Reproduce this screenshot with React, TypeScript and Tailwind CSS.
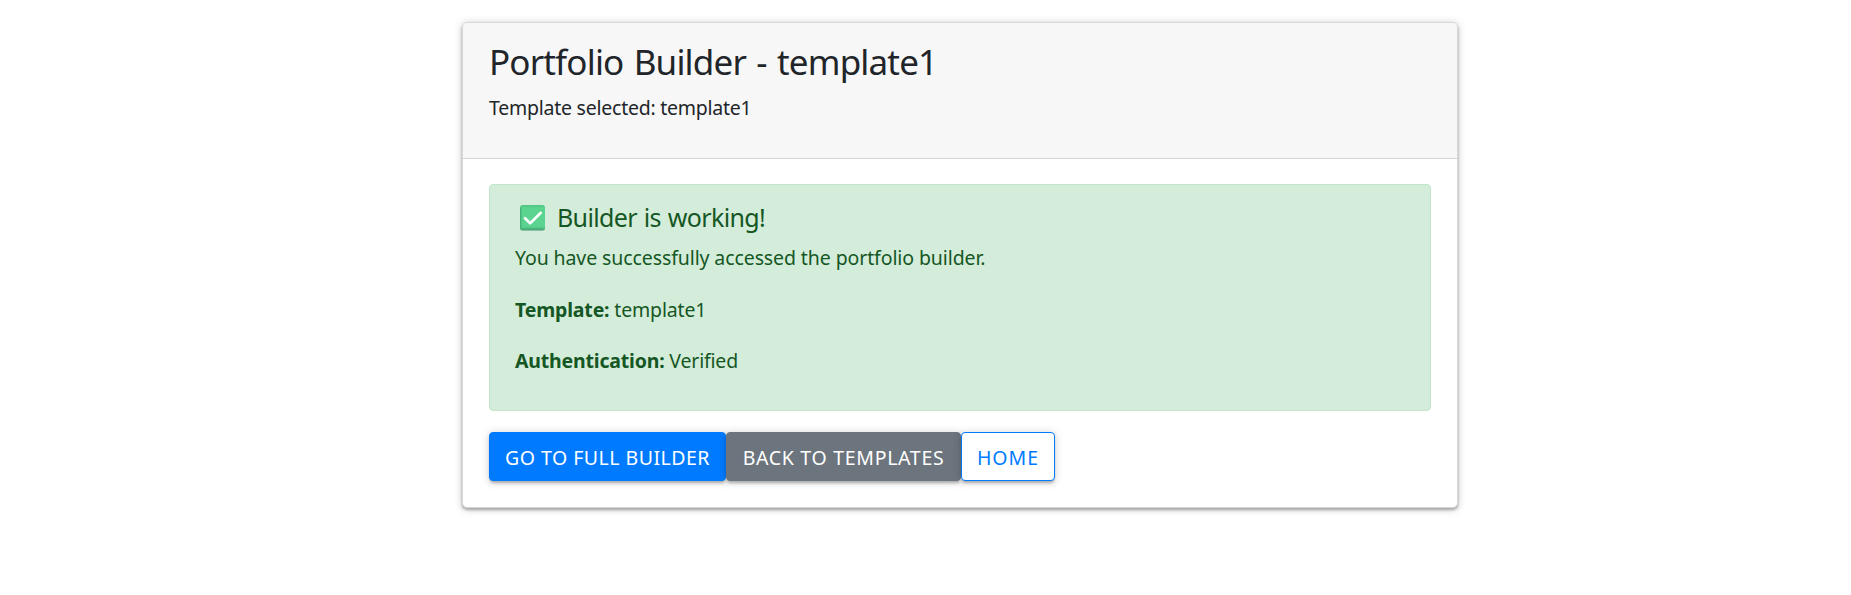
import React from "react";

function CheckMark() {
  return (
    <svg width="25" height="26" viewBox="0 0 25 26" className="block shrink-0" aria-hidden="true">
      <defs>
        <linearGradient id="edge" x1="0" y1="0" x2="0" y2="1">
          <stop offset="0" stopColor="#50c288" />
          <stop offset="0.12" stopColor="#5ad58f" />
          <stop offset="0.85" stopColor="#5ad390" />
          <stop offset="1" stopColor="#419a70" />
        </linearGradient>
      </defs>
      <rect x="0" y="0" width="25" height="25.5" rx="2.5" fill="url(#edge)" />
      <path d="M0.8 2.5V23" stroke="#43aa77" strokeWidth="1.2" />
      <path d="M5 13.2L10.2 18.2L20.8 7.8" fill="none" stroke="#fff" strokeWidth="2.6" strokeLinecap="round" strokeLinejoin="round" />
    </svg>
  );
}

const button =
  "flex h-[49px] items-center justify-center whitespace-nowrap rounded-[4px] border pt-[2px] text-[19.5px] leading-[30px] shadow-[0_3px_3px_-1px_rgba(0,0,0,0.25),0_1px_8px_rgba(0,0,0,0.2)]";

export default function App() {
  return (
    <main className="flex min-h-[595px] justify-center bg-white pl-[69px] pt-[22px] font-['Noto_Sans',sans-serif] text-[#212529]">
      <section className="h-[486px] w-[996px] rounded-[5px] border border-[#d6d6d6] bg-white shadow-[0_2px_3px_rgba(0,0,0,0.28),0_1px_9px_rgba(0,0,0,0.2)]">
        <header className="h-[136px] rounded-t-[4px] border-b border-[#d6d6d6] bg-[#f7f7f7] px-[26px] pt-[17px]">
          <h2 className="h-[44px] whitespace-nowrap text-[35px] leading-[44px] tracking-[-0.83px] [word-spacing:2px]">Portfolio Builder - template1</h2>
          <p className="mt-[9px] whitespace-nowrap text-[19.5px] leading-[30px] tracking-[-0.24px]">Template selected: template1</p>
        </header>
        <div className="px-[26px] pt-[25px]">
          <div className="h-[227px] rounded-[4px] border border-[#c3e6cb] bg-[#d4edda] px-[25px] pt-[16px] text-[#155724]">
            <h4 className="flex h-[33px] items-center gap-[12px] pl-[5px] text-[25px] leading-[33px] tracking-[-0.64px] [word-spacing:1px]">
              <CheckMark />
              <span className="whitespace-nowrap">Builder is working!</span>
            </h4>
            <p className="mt-[9px] whitespace-nowrap text-[19.5px] leading-[30px] tracking-[-0.1px]">You have successfully accessed the portfolio builder.</p>
            <p className="mt-[22px] whitespace-nowrap text-[19.5px] leading-[30px] tracking-[-0.17px]"><strong>Template:</strong> <span>template1</span></p>
            <p className="mt-[21px] whitespace-nowrap text-[19.5px] leading-[30px] tracking-[-0.19px]"><strong>Authentication:</strong> <span>Verified</span></p>
          </div>
          <div className="mt-[21px] flex">
            <a className={`${button} w-[237px] border-[#007bff] bg-[#007bff] tracking-[0.49px] text-white`}>GO TO FULL BUILDER</a>
            <a className={`${button} w-[235px] border-[#6c757d] bg-[#6c757d] tracking-[0.7px] text-white`}>BACK TO TEMPLATES</a>
            <a className={`${button} w-[94px] border-[#007bff] bg-white tracking-[1px] text-[#007bff]`}>HOME</a>
          </div>
        </div>
      </section>
    </main>
  );
}
